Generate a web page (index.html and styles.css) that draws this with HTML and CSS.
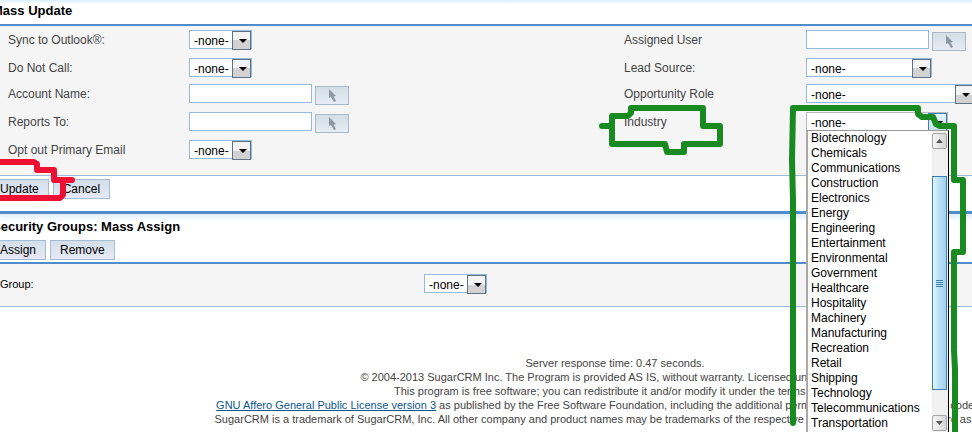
FILE: index.html
```html
<!DOCTYPE html>
<html lang="en">
<head>
  <meta charset="utf-8">
  <title>Mass Update</title>
  <link rel="stylesheet" href="styles.css">
</head>
<body>

  <svg width="0" height="0" class="defs">
    <symbol id="arrow" viewBox="0 0 9 13">
      <path d="M1 0 L1 9 L3 8 L6 13 L8 12 L5.5 7.5 L8 7 Z" fill="#8f979e"/>
    </symbol>
  </svg>

  <section class="mass-update">
    <h2>Mass Update</h2>
    <div class="panel fields">
      <label for="sync">Sync to Outlook®:</label>
      <div><span class="select"><select id="sync"><option>-none-</option></select></span></div>
      <label for="assigned">Assigned User</label>
      <div class="picker">
        <input type="text" id="assigned">
        <button type="button" aria-label="Select user"><svg><use href="#arrow"/></svg></button>
      </div>

      <label for="dnc">Do Not Call:</label>
      <div><span class="select"><select id="dnc"><option>-none-</option></select></span></div>
      <label for="lead">Lead Source:</label>
      <div><span class="select medium"><select id="lead"><option>-none-</option></select></span></div>

      <label for="account">Account Name:</label>
      <div class="picker">
        <input type="text" id="account">
        <button type="button" aria-label="Select account"><svg><use href="#arrow"/></svg></button>
      </div>
      <label for="role">Opportunity Role</label>
      <div><span class="select wide"><select id="role"><option>-none-</option></select></span></div>

      <label for="reports">Reports To:</label>
      <div class="picker">
        <input type="text" id="reports">
        <button type="button" aria-label="Select contact"><svg><use href="#arrow"/></svg></button>
      </div>
      <label for="industry">Industry</label>
      <div>
        <span class="select open">
          <select id="industry"><option>-none-</option></select>
          <span class="menu">
            <ul role="listbox" aria-label="Industry">
              <li role="option">Biotechnology</li>
              <li role="option">Chemicals</li>
              <li role="option">Communications</li>
              <li role="option">Construction</li>
              <li role="option">Electronics</li>
              <li role="option">Energy</li>
              <li role="option">Engineering</li>
              <li role="option">Entertainment</li>
              <li role="option">Environmental</li>
              <li role="option">Government</li>
              <li role="option">Healthcare</li>
              <li role="option">Hospitality</li>
              <li role="option">Machinery</li>
              <li role="option">Manufacturing</li>
              <li role="option">Recreation</li>
              <li role="option">Retail</li>
              <li role="option">Shipping</li>
              <li role="option">Technology</li>
              <li role="option">Telecommunications</li>
              <li role="option">Transportation</li>
            </ul>
            <span class="scrollbar">
              <span class="step"><svg viewBox="0 0 7 4"><path d="M0 4 L3.5 0 L7 4 Z"/></svg></span>
              <span class="thumb"><i></i><i></i><i></i><i></i></span>
              <span class="step"><svg viewBox="0 0 7 4"><path d="M0 0 L7 0 L3.5 4 Z"/></svg></span>
            </span>
          </span>
        </span>
      </div>

      <label for="optout">Opt out Primary Email</label>
      <div><span class="select"><select id="optout"><option>-none-</option></select></span></div>
    </div>
    <div class="buttons">
      <button type="button">Update</button>
      <button type="button">Cancel</button>
    </div>
  </section>

  <section class="security">
    <h2>Security Groups: Mass Assign</h2>
    <div class="buttons">
      <button type="button">Assign</button>
      <button type="button">Remove</button>
    </div>
    <div class="panel group">
      <label for="group">Group:</label>
      <div><span class="select"><select id="group"><option>-none-</option></select></span></div>
    </div>
  </section>

  <footer>
    Server response time: 0.47 seconds.<br>
    © 2004-2013 SugarCRM Inc. The Program is provided AS IS, without warranty. Licensed under AGPLv3.<br>
    This program is free software; you can redistribute it and/or modify it under the terms of the<br>
    <a href="#">GNU Affero General Public License version 3</a> as published by the Free Software Foundation, including the additional permission set forth in the source code header.<br>
    SugarCRM is a trademark of SugarCRM, Inc. All other company and product names may be trademarks of the respective companies with which they are associated.
  </footer>

  <!-- marker strokes -->
  <svg class="marks" width="972" height="432">
    <path class="red" d="M-4 162 H34 L37 164 V170 H54 V180 H72 M63 181 V195 L60 198 H-4"/>
    <path class="green" d="M602 126 H612 V116 H628 L631 113 V108 H703 V126 H720 V144 H684 V152 H667 L665 144 H612 V126"/>
    <path class="green" d="M793 423 V200 L792 160 L793 108 H918 V114 L922 117 H933 L936 124 L940 126 H954 V180 H963 V252 H954 V350 L955 370 V440"/>
  </svg>

</body>
</html>
```

FILE: styles.css
```css
* {
  box-sizing: border-box;
}

body {
  margin: 0;
  height: 100vh;
  overflow: hidden;
  background: #fff;
  font-family: "Liberation Sans", Arial, sans-serif;
  font-size: 12px;
  color: #000;
}

.defs {
  position: absolute;
}

h2 {
  margin: 0 0 0 -8px;
  font-size: 13px;
  line-height: 16px;
}

.mass-update {
  padding-top: 3px;
  background: linear-gradient(#dceefb, #fff 4px);
}

.mass-update h2 {
  padding-bottom: 5px;
}

.panel {
  background: #f5f5f5;
  border-top: 2px solid #4e8ccc;
  border-bottom: 1px solid #9dbbd6;
}

.fields {
  display: grid;
  grid-template-columns: 181fr 435fr 182fr 166fr;
  row-gap: 7px;
  align-items: start;
  padding: 4px 0 16px 8px;
}

.fields > div {
  display: flex;
  min-width: 0;
}

.fields label {
  line-height: 20px;
  height: 19px;
  color: #444;
}

.select {
  position: relative;
  display: flex;
  flex: none;
  width: 63px;
  height: 19px;
}

.select.medium {
  width: 126px;
}

.select.wide {
  width: 169px;
}

.select.open {
  width: 142px;
}

select,
input {
  width: 100%;
  height: 19px;
  margin: 0;
  padding: 2px 4px 0;
  border: 1px solid #94bbdf;
  border-radius: 0;
  background: #fff;
  color: #000;
  font: inherit;
  appearance: none;
}

/* drop-down button and its triangle */
.select::before {
  content: "";
  position: absolute;
  top: 1px;
  right: 1px;
  width: 17px;
  height: 17px;
  border: 1px solid #5f7182;
  background: linear-gradient(#f4f4f4 50%, #d2d2d2 50%);
  pointer-events: none;
}

.select::after {
  content: "";
  position: absolute;
  top: 9px;
  right: 5px;
  border: 4px solid transparent;
  border-top-color: #000;
  border-bottom: 0;
  pointer-events: none;
}

.select.open::before {
  border-color: #3c7fb1;
  background: linear-gradient(#e4f3fb, #c4e2f3);
}

.select.open select {
  border-color: #b5b9bd;
}

.picker input {
  width: 123px;
}

.picker button {
  display: flex;
  justify-content: center;
  align-items: center;
  width: 34px;
  height: 19px;
  margin: 2px 0 0 3px;
  padding: 0;
  border: 1px solid #a9b9c8;
  background: linear-gradient(#d3dee7, #e6ecf4);
}

.picker svg {
  width: 9px;
  height: 13px;
}

.menu {
  position: absolute;
  top: 18px;
  left: 0;
  z-index: 1;
  display: flex;
  width: 143px;
  border: 1px solid #000;
  border-top-color: #999;
  border-left: 2px solid #a9a9a9;
  background: #fff;
}

.menu ul {
  flex: 1;
  margin: 0;
  padding: 0 0 15px;
  list-style: none;
}

.menu li {
  padding-left: 3px;
  line-height: 15px;
}

.scrollbar {
  display: flex;
  flex-direction: column;
  width: 16px;
  height: 301px;
  padding: 2px 1px 1px 0;
  background: #f0f0f0;
}

.step {
  display: flex;
  justify-content: center;
  align-items: center;
  height: 16px;
  border: 1px solid #a6a6a6;
  border-radius: 2px;
  background: linear-gradient(90deg, #f6f6f6, #d4d4d4);
}

.step svg {
  width: 7px;
  height: 4px;
  fill: #555;
}

.thumb {
  display: flex;
  flex: 1;
  flex-direction: column;
  justify-content: center;
  align-items: center;
  gap: 1px;
  margin: 27px 0 25px;
  border: 1px solid #3c7fb1;
  background: linear-gradient(90deg, #e2f3fc, #b8e0f6 50%, #9fd2ef);
}

.thumb i {
  width: 7px;
  height: 1px;
  background: #3c7fa5;
}

.buttons {
  display: flex;
  gap: 4px;
  margin-left: -10px;
}

.buttons button {
  height: 20px;
  padding: 0 9px;
  border: 1px solid #a5bdd3;
  background: linear-gradient(#d3dfe9, #e6e9f6);
  color: #000;
  font: inherit;
}

.mass-update .buttons {
  padding: 3px 0 12px;
}

.security {
  padding-top: 5px;
  border-top: 3px solid #4e8ccc;
  background: linear-gradient(#e0eefa, #fff 8px);
}

.security .buttons {
  padding: 5px 0 2px;
}

.group {
  display: grid;
  grid-template-columns: 424fr 548fr;
  padding: 10px 0 12px;
}

.group label {
  font-size: 11px;
  line-height: 20px;
}

footer {
  /* the footer is centred on the full page, which runs past the window */
  margin: 49px -258px 0 0;
  color: #444;
  font-size: 11px;
  line-height: 14px;
  text-align: center;
  white-space: nowrap;
}

footer a {
  color: #0b578f;
}

.marks {
  position: absolute;
  top: 0;
  left: 0;
  z-index: 2;
  pointer-events: none;
}

.marks path {
  fill: none;
  stroke-width: 6;
  stroke-linecap: round;
  stroke-linejoin: round;
}

.marks .red {
  stroke: #ee1133;
}

.marks .green {
  stroke: #198a20;
}
```
